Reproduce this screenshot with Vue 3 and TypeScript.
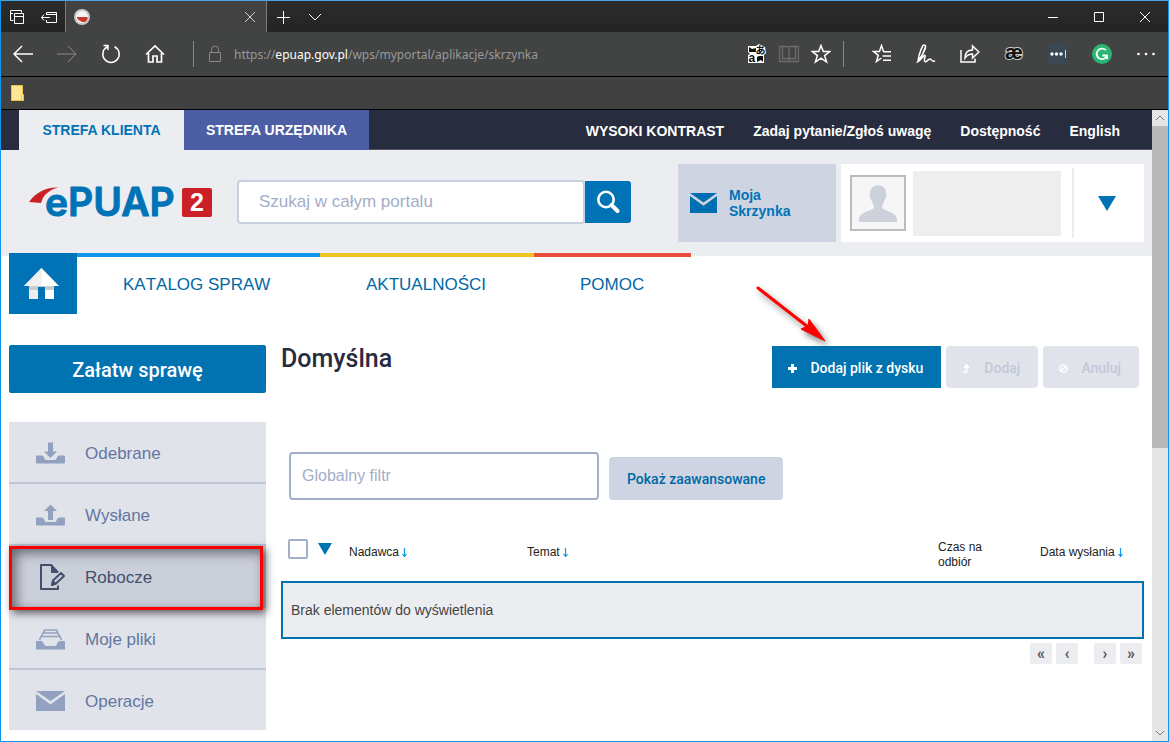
<script setup lang="ts">
import { ref } from 'vue'

interface MenuItem {
  id: string
  label: string
}

interface Column {
  id: string
  label: string
  sortable: boolean
}

const menu: MenuItem[] = [
  { id: 'inbox', label: 'Odebrane' },
  { id: 'sent', label: 'Wysłane' },
  { id: 'drafts', label: 'Robocze' },
  { id: 'files', label: 'Moje pliki' },
  { id: 'operations', label: 'Operacje' },
]

const columns: Column[] = [
  { id: 'sender', label: 'Nadawca', sortable: true },
  { id: 'subject', label: 'Temat', sortable: true },
  { id: 'due', label: 'Czas na odbiór', sortable: false },
  { id: 'date', label: 'Data wysłania', sortable: true },
]

const active = ref('drafts')
const search = ref('')
const filter = ref('')
const allSelected = ref(false)
</script>

<template>
  <div class="window">
    <header class="chrome">
      <div class="titlebar">
        <button class="tool small" aria-label="Odłożone karty">
          <svg width="16" height="16" viewBox="0 0 16 16" class="line"><path d="M4.500 11.500H1.500V1.500H12.500V3.500M1.500 4.500H4M5.500 4.500H14.500V14.500H5.500zM5.500 7.500H14.500" /></svg>
        </button>
        <button class="tool small" aria-label="Odłóż karty">
          <svg width="16" height="16" viewBox="0 0 16 16" class="line"><path d="M5.500 6V3.500H15.500V13.500H5.500V11M5.500 5.500H15.500M0.500 8.500H9M3 5.500L0.500 8.500L3 11.500" /></svg>
        </button>
        <div class="tab">
          <svg width="16" height="16" viewBox="0 0 16 16">
            <circle cx="8" cy="8" r="8" fill="#c9c9c9" />
            <circle cx="8" cy="8" r="6" fill="#f4f4f4" />
            <path d="M3 8H13.500C14 10 12.500 12.500 11 13H8L5.500 11.500C3.500 10.500 3 9 3 8z" fill="#c8372d" />
          </svg>
          <button class="tab-close" aria-label="Zamknij kartę">
            <svg width="12" height="12" viewBox="0 0 12 12" class="line"><path d="M1 1L11 11M11 1L1 11" /></svg>
          </button>
        </div>
        <button class="tool small" aria-label="Nowa karta">
          <svg width="14" height="14" viewBox="0 0 14 14" class="line"><path d="M7.500 1V14M1 7.500H14" /></svg>
        </button>
        <button class="tool small" aria-label="Podgląd kart">
          <svg width="14" height="10" viewBox="0 0 14 10" class="line"><path d="M1 2L7 8L13 2" /></svg>
        </button>
        <div class="spring"></div>
        <button class="tool control" aria-label="Minimalizuj">
          <svg width="10" height="10" viewBox="0 0 10 10" class="line"><path d="M0 5.500H10" /></svg>
        </button>
        <button class="tool control" aria-label="Maksymalizuj">
          <svg width="10" height="10" viewBox="0 0 10 10" class="line"><path d="M0.500 0.500H9.500V9.500H0.500z" /></svg>
        </button>
        <button class="tool control" aria-label="Zamknij">
          <svg width="10" height="10" viewBox="0 0 10 10" class="line"><path d="M0 0L10 10M10 0L0 10" /></svg>
        </button>
      </div>

      <div class="toolbar">
        <button class="tool" aria-label="Wstecz">
          <svg width="20" height="18" viewBox="0 0 20 18" class="line thick"><path d="M1 9H20M9 1L1 9L9 17" /></svg>
        </button>
        <button class="tool dim" aria-label="Dalej">
          <svg width="20" height="18" viewBox="0 0 20 18" class="line"><path d="M0 9H19M11 1L19 9L11 17" /></svg>
        </button>
        <button class="tool" aria-label="Odśwież">
          <svg width="20" height="20" viewBox="0 0 20 20" class="line thick"><path d="M6.500 2.800A8.200 8.200 0 1 0 13.500 2.800M2.500 1.500H7V6" /></svg>
        </button>
        <button class="tool" aria-label="Strona główna">
          <svg width="20" height="20" viewBox="0 0 20 20" class="line"><path d="M1 10.500L10 2L19 10.500M3.500 9V18H8V12H12V18H16.500V9" stroke-width="1.700" /></svg>
        </button>
        <span class="divider after-nav"></span>
        <svg class="lock line dim" width="14" height="18" viewBox="0 0 14 18"><path d="M1.500 7.500H12.500V16.500H1.500zM3.500 7.500V4.500A3.500 3.500 0 0 1 10.500 4.500V7.500" /></svg>
        <div class="address" role="textbox" aria-label="Adres" aria-readonly="true" tabindex="0">https://<span class="host">epuap.gov.pl</span>/wps/myportal/aplikacje/skrzynka</div>
        <button class="tool small" aria-label="Przetłumacz">
          <svg width="32" height="32" viewBox="-6 -6 32 32">
            <path d="M1 2H9L12 0L18 3L19 9L17 11V19H9L1 19V11L3 10L1 8z" fill="#fff" />
            <path d="M2 3L5 5L9 4V8H2zM10 13L12 12H16V18L14 16L10 18z" fill="#111" />
            <text x="8.500" y="10" class="kana">あ</text>
            <text x="1.500" y="18" class="latin">a</text>
          </svg>
        </button>
        <button class="tool small faint" aria-label="Widok do czytania">
          <svg width="20" height="18" viewBox="0 0 20 18" class="line"><path d="M0.500 1.500H8.500L10 2.500L11.500 1.500H19.500V16.500H0.500zM10 2.500V16M3.500 1.500V13.500H8.500L10 15L11.500 13.500H16.500V1.500" stroke-width="1.300" /></svg>
        </button>
        <button class="tool small" aria-label="Dodaj do ulubionych">
          <svg width="20" height="20" viewBox="0 0 20 20" class="line thick"><path d="M10 1.500L12.300 7.600H18.800L13.600 11.600L15.600 18L10 14.200L4.400 18L6.400 11.600L1.200 7.600H7.700z" /></svg>
        </button>
        <span class="divider after-star"></span>
        <button class="tool" aria-label="Ulubione">
          <svg width="20" height="20" viewBox="0 0 20 20" class="line thick"><path d="M12.500 7.500H11.500L9.500 1.500L7.500 7.500H1.500L6.300 11.300L4.500 17.500L9.500 14M11.500 7.700H19M10.500 12H19M11 16.300H19" /></svg>
        </button>
        <button class="tool" aria-label="Dodaj notatki">
          <svg width="20" height="20" viewBox="0 0 20 20" class="line thick"><path d="M3 11.500C4 8 5.500 4 7 1.500C8.500 0.500 10 1.500 9.500 3C8 8 5.500 13 2 17.500L3 11.500M9.500 3.500C8.500 8 5 13 2 17.500C5 16 8 10.500 9 11.500C10 12.500 7 16.500 9 17.500C11 18.500 12 15 14 15C15.500 15 15.500 18 19 17" /></svg>
        </button>
        <button class="tool" aria-label="Udostępnij">
          <svg width="20" height="20" viewBox="0 0 20 20" class="line thick"><path d="M1 6V18H15V14.500M5 14C5 8.500 8 6 12.500 6V2L19 8L12.500 14V10C9.500 10 7 11 5 14z" /></svg>
        </button>
        <button class="tool" aria-label="Słownik">
          <svg width="32" height="32" viewBox="0 0 32 32"><text x="16" y="21" text-anchor="middle" class="ash">æ</text></svg>
        </button>
        <button class="tool" aria-label="Hasła">
          <svg width="20" height="20" viewBox="0 0 20 20"><rect width="20" height="20" rx="1" fill="#3a4854" /><g fill="#fff"><circle cx="4" cy="10" r="1.700" /><circle cx="8.500" cy="10" r="1.700" /><circle cx="13" cy="10" r="1.700" /><rect x="17" y="6" width="1" height="8" opacity="0.800" /></g></svg>
        </button>
        <button class="tool" aria-label="Sprawdzanie pisowni">
          <svg width="20" height="20" viewBox="0 0 20 20"><circle cx="10" cy="10" r="10" fill="#2bb673" /><path d="M13.800 6.200A5.300 5.300 0 1 0 15 11.500M10.500 11.500H15V15" fill="none" stroke="#fff" stroke-width="1.800" /></svg>
        </button>
        <button class="tool" aria-label="Więcej">
          <svg width="18" height="4" viewBox="0 0 18 4" fill="#fff"><circle cx="1.500" cy="2" r="1.300" /><circle cx="9" cy="2" r="1.300" /><circle cx="16.500" cy="2" r="1.300" /></svg>
        </button>
      </div>

      <div class="favorites">
        <svg width="13" height="16" viewBox="0 0 13 16"><path d="M0.500 0.500H11.500V9.500H12.500V15.500H0.500z" fill="#ffe596" stroke="#f0c23e" /><path d="M10.500 15V10.500" stroke="#f0c23e" /></svg>
      </div>
    </header>

    <div class="viewport">
      <div class="page">
        <div class="topnav">
          <a href="#" class="zone current">STREFA KLIENTA</a>
          <a href="#" class="zone office">STREFA URZĘDNIKA</a>
          <nav class="links">
            <a href="#">WYSOKI KONTRAST</a>
            <a href="#">Zadaj pytanie/Zgłoś uwagę</a>
            <a href="#">Dostępność</a>
            <a href="#">English</a>
          </nav>
        </div>

        <div class="masthead">
          <a href="#" class="logo" aria-label="ePUAP 2">
            <svg width="184" height="56" viewBox="0 -12 184 56">
              <path d="M0 15C6 6 17 0 29 0.500C20 3 14 8 12 16z" fill="#cb2026" />
              <text x="16" y="29" class="wordmark">ePUAP</text>
              <rect x="153" y="1" width="30" height="29" rx="2" fill="#cb2026" />
              <text x="168" y="24" text-anchor="middle" class="version">2</text>
            </svg>
          </a>
          <form class="search" @submit.prevent>
            <input v-model="search" type="text" placeholder="Szukaj w całym portalu" aria-label="Szukaj w całym portalu" />
            <button aria-label="Szukaj">
              <svg width="24" height="24" viewBox="0 0 24 24" fill="none" stroke="#fff"><circle cx="10" cy="9.500" r="7.700" stroke-width="2.600" /><path d="M15.500 15L21.500 21" stroke-width="4" stroke-linecap="round" /></svg>
            </button>
          </form>
          <a href="#" class="mailbox">
            <svg width="27" height="20" viewBox="0 0 27 20"><path d="M0 0H27L13.500 9.500zM0 3L13.500 12.800L27 3V20H0z" fill="#006eb3" /></svg>
            <span>Moja<br />Skrzynka</span>
          </a>
          <div class="user">
            <div class="avatar">
              <svg width="38" height="37" viewBox="0 0 38 37"><path d="M11 9C11 3 14 0.500 19 0.500S27 3 27 9C28 11 27 13 26 14C25 18 23 20 23 22C23 26 37 26 38 34V37H0V34C1 26 15 26 15 22C15 20 13 18 12 14C11 13 10 11 11 9z" fill="#ccd1da" /></svg>
            </div>
            <div class="identity"></div>
            <button class="user-menu" aria-label="Menu użytkownika">
              <svg width="18" height="15" viewBox="0 0 18 15"><path d="M0 0H18L9 15z" fill="#0073b7" /></svg>
            </button>
          </div>
        </div>

        <nav class="mainnav">
          <a href="#" class="home" aria-label="Strona główna">
            <svg width="35" height="32" viewBox="0 0 35 32">
              <path d="M5 16H14V31H5z" fill="#ededed" /><path d="M21 16H30V31H21z" fill="#fff" />
              <path d="M5 18H30V22H21V19H14V22H5z" fill="#ccc" />
              <path d="M17.500 0L35 18H0z" fill="#fff" /><path d="M17.500 0V18H0z" fill="#efefef" />
            </svg>
          </a>
          <a href="#" class="section catalog">KATALOG SPRAW</a>
          <a href="#" class="section news">AKTUALNOŚCI</a>
          <a href="#" class="section help">POMOC</a>
        </nav>

        <div class="body">
          <aside class="side">
            <button class="primary wide">Załatw sprawę</button>
            <ul class="menu">
              <li v-for="item in menu" :key="item.id" :class="{ active: item.id === active }">
                <a href="#" @click.prevent="active = item.id">
                  <svg width="29" height="28" viewBox="0 0 29 28" fill="#92a1c0">
                    <template v-if="item.id === 'inbox' || item.id === 'sent'">
                      <path d="M0 16.500Q0 15.500 1 15.500H6Q8 16 8.500 18.500Q9 20 10.500 20H18.500Q20 20 20.500 18.500Q21 16 23 15.500H28Q29 15.500 29 16.500V22.500Q29 23.500 28 23.500H1Q0 23.500 0 22.500z" />
                      <path v-if="item.id === 'inbox'" d="M12 2.500H17V11.500H21L14.500 18L8 11.500H12z" />
                      <path v-else d="M12 18V9H8L14.500 2.500L21 9H17V18z" />
                    </template>
                    <template v-else-if="item.id === 'drafts'">
                      <path d="M16 1H5V25H22V21.500M16 1V8H22" fill="none" stroke="#42506b" stroke-width="2" stroke-linejoin="round" />
                      <path d="M15.500 0L23 8H15.500z" fill="#42506b" />
                      <path d="M16 21L17 16.500L25 9L28 12L20 19.500z" fill="none" stroke="#42506b" stroke-width="2" stroke-linejoin="round" />
                      <path d="M15 22L16.500 15.500L21 20z" fill="#42506b" />
                    </template>
                    <template v-else-if="item.id === 'files'">
                      <path d="M0 16Q0 15 1 15H5Q7 15 8 18Q8.500 20 10 20H19Q20.500 20 21 18Q22 15 24 15H28Q29 15 29 16V23.500H0z" />
                      <path d="M3.500 14L5 10.500H24L25.500 14M5.500 10.500L7 7H22L23.500 10.500M7.500 7L8.500 4H20.500L21.500 7" fill="none" stroke="#92a1c0" stroke-width="1.600" />
                    </template>
                    <path v-else d="M0 3H29L14.500 13zM0 6L14.500 16.500L29 6V23H0z" />
                  </svg>
                  <span>{{ item.label }}</span>
                </a>
                <span v-if="item.id === 'drafts'" class="highlight"></span>
              </li>
            </ul>
          </aside>

          <main class="main">
            <div class="heading">
              <h1>Domyślna</h1>
              <div class="actions">
                <div class="pointed">
                  <button class="primary">
                    <svg width="9" height="9" viewBox="0 0 9 9" fill="#fff"><path d="M3 0H6V3H9V6H6V9H3V6H0V3H3z" /></svg>
                    Dodaj plik z dysku
                  </button>
                  <svg class="arrow" width="90" height="80" viewBox="0 0 90 80">
                    <path d="M7 8L57 47" stroke="#f00" stroke-width="3" stroke-linecap="round" />
                    <path d="M74 61L50 49L57 46L58 39z" fill="#f00" stroke="#f00" />
                  </svg>
                </div>
                <button class="ghost" disabled>
                  <svg width="9" height="9" viewBox="0 0 9 9"><path d="M1 8H4.500V2.500M2 4L4.500 1L7 4" fill="none" stroke="#fff" stroke-width="1.600" /></svg>
                  Dodaj
                </button>
                <button class="ghost" disabled>
                  <svg width="9" height="9" viewBox="0 0 9 9"><path d="M4.500 1A3.500 3.500 0 1 0 4.500 8A3.500 3.500 0 1 0 4.500 1M2.500 6.500L6.500 2.500" fill="none" stroke="#fff" stroke-width="1.500" /></svg>
                  Anuluj
                </button>
              </div>
            </div>

            <div class="filters">
              <input v-model="filter" type="text" placeholder="Globalny filtr" aria-label="Globalny filtr" />
              <button class="soft">Pokaż zaawansowane</button>
            </div>

            <table>
              <thead>
                <tr>
                  <th class="select">
                    <div class="select-all">
                      <input v-model="allSelected" type="checkbox" aria-label="Zaznacz wszystkie" />
                      <button class="plain" aria-label="Opcje zaznaczania">
                        <svg width="14" height="12" viewBox="0 0 14 12"><path d="M0 0H14L7 12z" fill="#0073b7" /></svg>
                      </button>
                    </div>
                  </th>
                  <th v-for="column in columns" :key="column.id" :class="column.id">
                    <button v-if="column.sortable" class="plain sort">
                      {{ column.label }}
                      <svg width="5" height="9" viewBox="0 0 5 9"><path d="M2.500 0V8M0.500 6L2.500 8.500L4.500 6" fill="none" stroke="#0d96ea" stroke-width="1.200" /></svg>
                    </button>
                    <template v-else>{{ column.label }}</template>
                  </th>
                </tr>
              </thead>
              <tbody>
                <tr>
                  <td colspan="5">Brak elementów do wyświetlenia</td>
                </tr>
              </tbody>
            </table>

            <nav class="pager" aria-label="Strony">
              <button aria-label="Pierwsza">«</button>
              <button aria-label="Poprzednia">‹</button>
              <span class="pages"></span>
              <button aria-label="Następna">›</button>
              <button aria-label="Ostatnia">»</button>
            </nav>
          </main>
        </div>
      </div>

      <div class="scrollbar" aria-hidden="true">
        <svg width="16" height="16" viewBox="0 0 16 16"><path d="M4 10L8 6L12 10" /></svg>
        <div class="track"><div class="thumb"></div></div>
        <svg width="16" height="16" viewBox="0 0 16 16"><path d="M4 6L8 10L12 6" /></svg>
      </div>
    </div>
  </div>
</template>

<style>
body {
  margin: 0;
  background: #fff;
}
</style>

<style scoped>
*,
*::before,
*::after {
  box-sizing: border-box;
}

button,
input {
  font-family: inherit;
  margin: 0;
}

button {
  border: 0;
  padding: 0;
  background: none;
  cursor: pointer;
}

a {
  text-decoration: none;
}

svg {
  display: block;
  flex: none;
}

.window {
  display: flex;
  flex-direction: column;
  min-height: 100vh;
  border: 1px solid #0d96ea;
  border-top-color: #45a5e4;
  font-family: 'Liberation Sans', Arial, sans-serif;
  background: #fff;
}

/* Browser chrome */
.titlebar {
  display: flex;
  height: 31px;
  background: linear-gradient(#2c2c2c, #242424);
}

.tool {
  display: flex;
  flex: none;
  align-items: center;
  justify-content: center;
  width: 44px;
  color: #fff;
}

.tool.small {
  width: 32px;
}

.tool.control {
  width: 46px;
}

.tool.dim,
.lock.dim {
  color: #8a8a8a;
}

.tool.faint {
  color: #6b6b6b;
}

.line {
  fill: none;
  stroke: currentColor;
  stroke-width: 1;
}

.line.thick {
  stroke-width: 1.5;
}

.tab {
  display: flex;
  align-items: center;
  justify-content: space-between;
  width: 202px;
  padding: 0 10px 0 8px;
  background: #424242;
  border: 1px solid #7c7c7c;
  border-width: 0 1px;
}

.tab-close {
  color: #d0d0d0;
}

.spring {
  flex: 1;
}

.toolbar {
  display: flex;
  align-items: stretch;
  height: 45px;
  background: #424343;
  border-bottom: 1px solid #000;
}

.divider {
  flex: none;
  align-self: center;
  width: 1px;
  height: 26px;
  background: #888;
}

.after-nav {
  margin: 0 14px 0 16px;
}

.after-star {
  margin: 0 16px 0 6px;
}

.lock {
  align-self: center;
}

.address {
  flex: 1;
  min-width: 0;
  overflow: hidden;
  white-space: nowrap;
  padding-left: 12px;
  font: 12px/45px 'Noto Sans', 'Segoe UI', sans-serif;
  color: #999;
}

.host {
  color: #fff;
}

.kana {
  font: bold 10px 'Noto Sans CJK JP', sans-serif;
  fill: #111;
}

.latin {
  font: bold 12px 'Liberation Sans', sans-serif;
  fill: #111;
}

.ash {
  font: bold 20px 'Liberation Sans', sans-serif;
  fill: #111;
  stroke: #ccc;
  stroke-width: 2px;
  stroke-linejoin: round;
  paint-order: stroke;
}

.favorites {
  display: flex;
  align-items: center;
  height: 33px;
  padding-left: 10px;
  background: #414141;
  border-bottom: 1px solid #000;
}

/* Web page */
.viewport {
  display: flex;
  flex: 1;
}

.page {
  flex: 1;
  min-width: 0;
}

.topnav {
  display: flex;
  height: 40px;
  padding-left: 18px;
  background: #272c3f;
  font-size: 14px;
  font-weight: bold;
  line-height: 40px;
}

.zone {
  text-align: center;
}

.zone.current {
  width: 165px;
  background: #ecedf1;
  color: #0073b7;
}

.zone.office {
  width: 185px;
  background: #4d5fa4;
  color: #fff;
}

.links {
  display: flex;
  flex: 1;
  justify-content: flex-end;
  gap: 29px;
  padding-right: 32px;
  border-bottom: 1px solid #535768;
}

.links a {
  color: #fff;
  line-height: 42px;
  height: 39px;
}

.masthead {
  display: flex;
  align-items: center;
  padding: 14px 8px 14px 28px;
  background: #ecedf1;
}

.search {
  display: flex;
  align-items: center;
  flex: 1;
  margin: 0 47px 2px 24px;
}

.search input {
  flex: 1;
  min-width: 0;
  height: 44px;
  padding: 0 20px;
  border: 2px solid #c8cfde;
  border-radius: 4px;
  background: #fff;
  font-size: 17px;
  outline: 0;
}

.search input::placeholder,
.filters input::placeholder {
  color: #a3aec8;
  opacity: 1;
}

.search button {
  display: flex;
  align-items: center;
  justify-content: center;
  width: 46px;
  height: 42px;
  border-radius: 0 3px 3px 0;
  background: #0073b7;
}

.mailbox {
  display: flex;
  align-items: center;
  gap: 12px;
  width: 158px;
  height: 78px;
  padding-left: 12px;
  margin-right: 5px;
  background: #ced4e2;
  color: #0073b7;
  font-size: 14px;
  font-weight: bold;
  line-height: 16px;
}

.user {
  display: flex;
  align-items: center;
  width: 303px;
  height: 78px;
  padding: 4px 0 4px 9px;
  background: #fff;
}

.avatar {
  display: flex;
  align-items: flex-end;
  justify-content: center;
  width: 56px;
  height: 56px;
  padding-bottom: 7px;
  border: 2px solid #bbb;
  background: #f6f6f9;
}

.identity {
  flex: 1;
  height: 65px;
  margin: 0 11px 0 7px;
  background: #eee;
}

.user-menu {
  display: flex;
  align-items: center;
  justify-content: center;
  align-self: stretch;
  width: 72px;
  padding-right: 4px;
  border-left: 2px solid #ecedf1;
}

.mainnav {
  display: flex;
  margin: -3px 0 0 8px;
}

.home {
  display: flex;
  align-items: center;
  justify-content: center;
  width: 68px;
  height: 61px;
  padding-right: 3px;
  background: #0073b7;
}

.section {
  padding-left: 46px;
  border-top: 4px solid;
  font-size: 17px;
  font-kerning: none;
  line-height: 56px;
}

.mainnav .section {
  color: #0068a6;
}

.mainnav .section.catalog {
  width: 243px;
  border-color: #0d96ea;
}

.mainnav .section.news {
  width: 214px;
  border-color: #efc41c;
}

.mainnav .section.help {
  width: 157px;
  border-color: #e94e3a;
}

.body {
  display: flex;
  gap: 15px;
  padding: 31px 8px 8px;
}

.side {
  flex: none;
  width: 257px;
}

.primary {
  background: #0073b0;
  color: #fff;
  font-family: Roboto, sans-serif;
  font-weight: 500;
}

.primary.wide {
  width: 100%;
  height: 48px;
  padding-top: 2px;
  border-radius: 2px;
  font-size: 20px;
}

.menu {
  margin: 29px 0 0;
  padding: 0;
  list-style: none;
}

.menu li {
  position: relative;
  background: #e0e3ea;
  border-bottom: 2px solid #bfc6d6;
}

.menu li:last-child {
  border-bottom: 0;
}

.menu a {
  display: flex;
  align-items: center;
  gap: 20px;
  height: 60px;
  padding: 3px 0 0 27px;
  color: #6376a0;
  font-size: 17px;
}

.menu li.active {
  background: #cbcfda;
}

.menu li.active a {
  color: #42506b;
}

.highlight {
  position: absolute;
  z-index: 1;
  inset: 0 3px -4px 0;
  border: 3px solid #f00;
  box-shadow: 3px 3px 8px rgba(0, 0, 0, 0.6), inset 4px 4px 12px rgba(0, 0, 0, 0.5);
  pointer-events: none;
}

.main {
  flex: 1;
  min-width: 0;
}

.heading {
  display: flex;
  align-items: flex-start;
  justify-content: space-between;
  padding: 1px 5px 0 0;
}

h1 {
  margin: 0;
  color: #272c3f;
  font: 500 25px/26px Roboto, sans-serif;
}

.actions {
  display: flex;
  gap: 5px;
}

.actions button {
  display: flex;
  align-items: center;
  gap: 13px;
  height: 42px;
  padding: 2px 18px 0 16px;
  font-size: 14px;
}

.actions .ghost,
.soft {
  border-radius: 4px;
  font-family: Roboto, sans-serif;
  font-weight: 500;
}

.ghost {
  background: #e0e3ea;
  color: #c3c9d8;
}

.pointed {
  position: relative;
}

.arrow {
  position: absolute;
  left: -21px;
  top: -66px;
  fill: none;
  filter: drop-shadow(3px 4px 3px rgba(0, 0, 0, 0.5));
  pointer-events: none;
}

.filters {
  display: flex;
  align-items: flex-end;
  gap: 10px;
  margin: 64px 0 27px 8px;
}

.filters input {
  width: 310px;
  height: 48px;
  padding: 0 11px;
  border: 2px solid #a3aec8;
  border-radius: 4px;
  font-size: 16px;
  outline: 0;
}

.soft {
  height: 43px;
  padding: 0 18px;
  background: #ced4e2;
  color: #0068a6;
  font-size: 14px;
}

table {
  width: 100%;
  table-layout: fixed;
  border-collapse: separate;
  border-spacing: 0;
}

th {
  height: 54px;
  padding: 2px 0 0;
  color: #222;
  font-size: 12px;
  font-weight: normal;
  line-height: 15px;
  text-align: left;
}

th.select {
  width: 68px;
}

th.sender {
  width: 178px;
}

th.due {
  width: 102px;
  padding-right: 40px;
}

th.date {
  width: 104px;
}

.select-all {
  display: flex;
  align-items: center;
  gap: 10px;
  padding: 0 0 12px 7px;
}

.select-all input {
  appearance: none;
  width: 20px;
  height: 20px;
  border: 2px solid #a3aec8;
  border-radius: 2px;
  background: #fff;
}

.select-all input:checked {
  background: #0073b7;
}

.plain {
  display: flex;
  align-items: center;
  gap: 3px;
  color: inherit;
  font-size: inherit;
  white-space: nowrap;
}

.plain.sort {
  padding-bottom: 6px;
}

td {
  height: 58px;
  padding: 0 8px;
  border: 2px solid #0073b0;
  background: #ecedf1;
  color: #444;
  font-size: 14px;
}

.pager {
  display: flex;
  justify-content: flex-end;
  gap: 4px;
  padding: 4px 2px 0 0;
}

.pager button {
  width: 22px;
  height: 21px;
  border-radius: 2px;
  background: #ecedf1;
  color: #555;
  font: 700 16px/18px Roboto, sans-serif;
}

.pages {
  width: 8px;
}

.scrollbar {
  display: flex;
  flex-direction: column;
  flex: none;
  width: 16px;
  background: #e6e6e6;
}

.scrollbar path {
  fill: none;
  stroke: #777;
}

.track {
  flex: 1;
}

.thumb {
  height: 322px;
  background: #b9b9b9;
}

.wordmark {
  font: 600 39px Inter, sans-serif;
  fill: #0073b7;
  stroke: #0073b7;
  stroke-width: 1px;
  stroke-linejoin: round;
}

.version {
  font: bold 25px 'Liberation Sans', sans-serif;
  fill: #fff;
}
</style>
